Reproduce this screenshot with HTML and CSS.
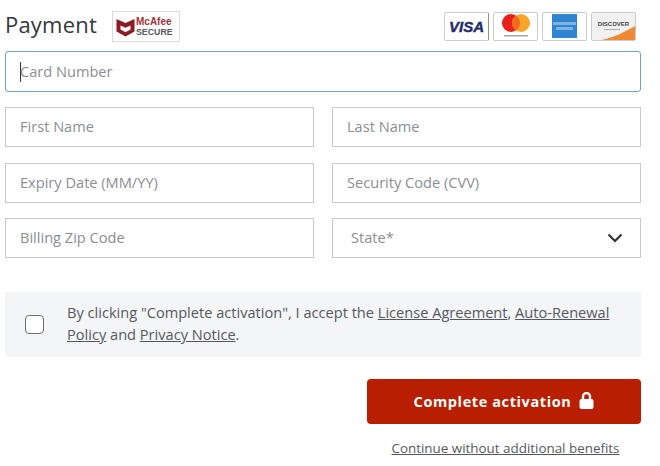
FILE: index.html
```html
<!DOCTYPE html>
<html lang="en">
<head>
    <meta charset="UTF-8">
    <title>Payment</title>
    <link rel="stylesheet" href="styles.css">
</head>
<body>

<div class="container">
    <!-- Header -->
    <div class="header">
        <h1 class="title">Payment</h1>
        <div class="mcafee">
            <svg class="mcafee-shield" width="19" height="20" viewBox="0 0 19 20">
                <path d="M0.5 2 L9.5 6 L18.5 2 V14.5 L9.5 19.5 L0.5 14.5 Z M4.5 8.5 V12.5 L9.5 15.2 L14.5 12.5 V8.5 L9.5 10.8 Z" fill="#8c1c24" fill-rule="evenodd"/>
            </svg>
            <div class="mcafee-text">
                <span class="mcafee-name">McAfee</span>
                <span class="mcafee-secure">SECURE</span>
            </div>
        </div>
        <div class="cards">
            <div class="card card-visa">
                <span class="visa">VISA</span>
            </div>
            <div class="card">
                <svg width="30" height="24" viewBox="0 0 30 24">
                    <circle cx="10" cy="9" r="9" fill="#e8211a"/>
                    <circle cx="20" cy="9" r="9" fill="#f8a62a"/>
                    <path d="M15 1.5 A9 9 0 0 1 15 16.5 A9 9 0 0 1 15 1.5 Z" fill="#f26a1f"/>
                    <rect x="3" y="21" width="24" height="1.5" fill="#a5a5a5"/>
                </svg>
            </div>
            <div class="card">
                <svg width="25" height="24" viewBox="0 0 25 24">
                    <rect width="25" height="24" fill="#2f83cf"/>
                    <rect x="1" y="8" width="23" height="3" fill="#7db3e2"/>
                    <rect x="4" y="13" width="17" height="3" fill="#7db3e2"/>
                </svg>
            </div>
            <div class="card card-discover">
                <span class="discover">DISCOVER</span>
                <span class="discover-line"></span>
                <svg class="discover-swoosh" width="43" height="17" viewBox="0 0 43 17">
                    <path d="M10 17 C22 14 33 9 43 3 V17 Z" fill="#ef8a33"/>
                </svg>
            </div>
        </div>
    </div>

    <!-- Form -->
    <div class="field field-focus">
        <span class="caret"></span>
        <span class="placeholder">Card Number</span>
    </div>

    <div class="row">
        <div class="field"><span class="placeholder">First Name</span></div>
        <div class="field"><span class="placeholder">Last Name</span></div>
    </div>
    <div class="row">
        <div class="field"><span class="placeholder">Expiry Date (MM/YY)</span></div>
        <div class="field"><span class="placeholder">Security Code (CVV)</span></div>
    </div>
    <div class="row">
        <div class="field"><span class="placeholder">Billing Zip Code</span></div>
        <div class="field field-select">
            <span class="placeholder">State*</span>
            <svg width="16" height="10" viewBox="0 0 16 10">
                <path d="M1.5 1.5 L8 8 L14.5 1.5" fill="none" stroke="#2b2f33" stroke-width="2"/>
            </svg>
        </div>
    </div>

    <!-- Consent -->
    <div class="consent">
        <span class="checkbox"></span>
        <p class="consent-text">By clicking "Complete activation", I accept the <a href="#">License Agreement</a>, <a href="#">Auto-Renewal</a> <a href="#">Policy</a> and <a href="#">Privacy Notice</a>.</p>
    </div>

    <!-- Actions -->
    <div class="actions">
        <button class="submit">
            Complete activation
            <svg class="lock" width="15" height="17" viewBox="0 0 15 17">
                <path d="M4 8 V4.5 A3.5 3.5 0 0 1 11 4.5 V8" fill="none" stroke="#fff" stroke-width="2.4"/>
                <rect x="0.5" y="7" width="14" height="10" rx="2" fill="#fff"/>
            </svg>
        </button>
        <a class="skip" href="#">Continue without additional benefits</a>
    </div>
</div>

</body>
</html>
```

FILE: styles.css
```css
body {
    font-family: 'Open Sans', sans-serif;
    background-color: #fff;
    color: #3c4045;
    margin: 0;
    padding: 0;
}

.container {
    width: 636px;
    margin-left: 5px;
    display: flex;
    flex-direction: column;
}

.header {
    display: flex;
    align-items: center;
    height: 31px;
    margin-top: 11px;
    margin-bottom: 8.75px;
}

.title {
    margin: 0 15px 5px 0;
    font-size: 22px;
    font-weight: 400;
    letter-spacing: 0.2px;
    color: #33373b;
    width: 92px;
}

.mcafee {
    width: 68px;
    height: 31px;
    box-sizing: border-box;
    border: 1px solid #dcdcdc;
    display: flex;
    align-items: center;
    gap: 1px;
    padding-left: 3px;
}

.mcafee-text {
    display: flex;
    flex-direction: column;
    font-family: 'Liberation Sans', sans-serif;
    font-weight: bold;
    line-height: 10px;
}

.mcafee-name {
    font-size: 10px;
    color: #a5323a;
}

.mcafee-secure {
    font-size: 8.8px;
    color: #55595c;
}

.cards {
    display: flex;
    gap: 4px;
    margin-left: auto;
    margin-right: 5px;
    height: 30px;
}

.card {
    position: relative;
    width: 45px;
    height: 29px;
    box-sizing: border-box;
    border: 1px solid #c9ccd0;
    border-radius: 2px;
    background-color: #fff;
    display: flex;
    align-items: center;
    justify-content: center;
    overflow: hidden;
}

.card-visa {
    border-right-color: #8a9a6a;
}

.visa {
    font-family: 'Liberation Sans', sans-serif;
    font-size: 15px;
    font-weight: bold;
    font-style: italic;
    color: #1d2a6b;
    -webkit-text-stroke: 0.4px #1d2a6b;
}

.card-discover {
    background-color: #f1f1f1;
    align-items: flex-start;
}

.discover {
    font-family: 'Liberation Sans', sans-serif;
    font-size: 6px;
    font-weight: bold;
    color: #444;
    margin-top: 8px;
}

.discover-line {
    position: absolute;
    left: 12px;
    top: 16px;
    width: 16px;
    height: 1px;
    background-color: #aaa;
}

.discover-swoosh {
    position: absolute;
    left: 0;
    bottom: 0;
}

.field {
    height: 40px;
    box-sizing: border-box;
    border: 1px solid #c6c8ca;
    display: flex;
    align-items: center;
    padding-left: 14px;
    padding-bottom: 2px;
    background-color: #fff;
}

.field-focus {
    height: 41px;
    padding-bottom: 1px;
    border-color: #6f9fc8;
    border-radius: 3px;
    position: relative;
}

.caret {
    position: absolute;
    left: 14px;
    top: 10px;
    width: 1px;
    height: 20px;
    background-color: #333;
}

.field-select {
    justify-content: space-between;
    padding-left: 18px;
    padding-right: 17px;
    padding-bottom: 0;
}

.field-select .placeholder {
    margin-bottom: 2px;
}

.placeholder {
    font-size: 14.6px;
    color: #8b8e92;
}

.row {
    display: grid;
    grid-template-columns: 1fr 1fr;
    gap: 18px;
    margin-top: 15.5px;
}

.consent {
    display: flex;
    align-items: center;
    height: 65px;
    margin-top: 33.75px;
    background-color: #f4f5f7;
    padding-left: 20px;
    padding-right: 28px;
}

.checkbox {
    flex: none;
    width: 19px;
    height: 19px;
    box-sizing: border-box;
    border: 1px solid #6b6f73;
    border-radius: 4px;
    background-color: #fff;
    margin-right: 23px;
}

.consent-text {
    margin: 0 0 3px;
    font-size: 14.6px;
    line-height: 22px;
    color: #55595e;
}

.consent-text a,
.skip {
    color: #55595e;
    text-decoration: underline;
}

.actions {
    display: flex;
    flex-direction: column;
    align-items: center;
    align-self: flex-end;
    width: 274px;
}

.submit {
    width: 100%;
    height: 45px;
    margin-top: 22px;
    border: none;
    border-radius: 4px;
    background-color: #b81f00;
    color: #fff;
    font-family: 'Open Sans', sans-serif;
    font-size: 14.5px;
    font-weight: 700;
    letter-spacing: 0.6px;
    display: flex;
    align-items: center;
    justify-content: center;
    gap: 8px;
}

.lock {
    margin-bottom: 3px;
}

.skip {
    margin-top: 15px;
    margin-left: 3px;
    font-size: 13.4px;
    line-height: 18px;
}
```
